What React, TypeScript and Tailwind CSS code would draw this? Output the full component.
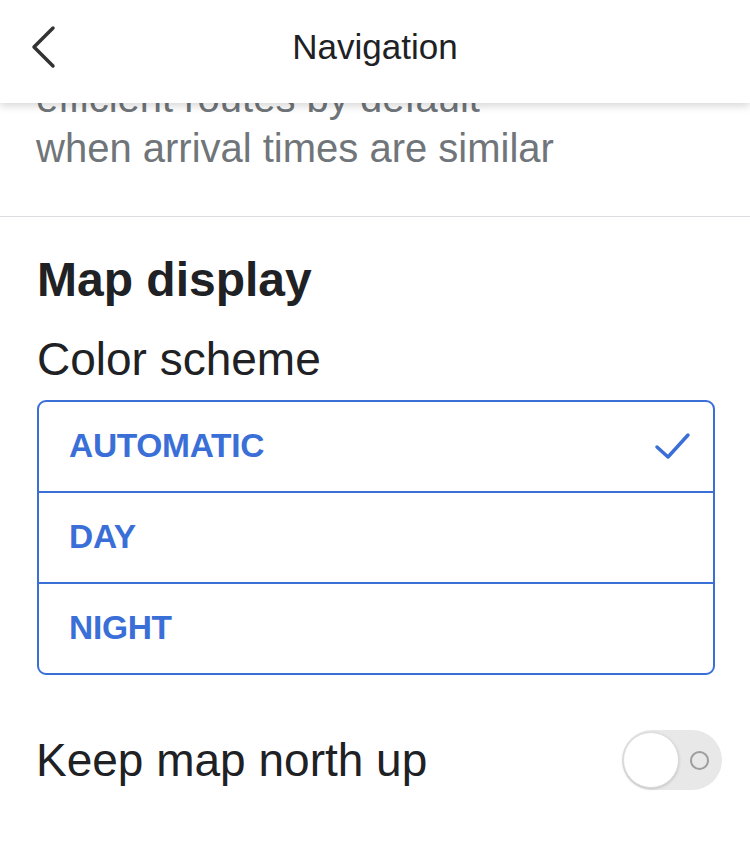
import { useState } from 'react';

const schemes = ['AUTOMATIC', 'DAY', 'NIGHT'];

function BackChevron() {
  return (
    <svg width="30" height="44" viewBox="0 0 30 44" fill="none">
      <path d="M22 3 L3 22 L22 41" stroke="#333333" strokeWidth="3.5" strokeLinecap="round" strokeLinejoin="round" />
    </svg>
  );
}

function Check() {
  return (
    <svg width="40" height="32" viewBox="0 0 40 32" fill="none">
      <path d="M4 16 L15 26 L35 4" stroke="#3a6fd8" strokeWidth="3.5" strokeLinecap="round" strokeLinejoin="round" />
    </svg>
  );
}

function Toggle({ on, onChange }: { on: boolean; onChange: () => void }) {
  return (
    <button
      onClick={onChange}
      aria-pressed={on}
      className="relative w-[100px] h-[60px] rounded-full bg-[#e8e8e8] flex items-center shrink-0"
    >
      <span className="absolute left-[1px] top-[2px] w-[56px] h-[56px] rounded-full bg-white border border-[#dcdcdc] shadow-[0_1px_3px_rgba(0,0,0,0.18)]" />
      <span className="absolute right-[13px] top-[21px] w-[19px] h-[19px] rounded-full border-2 border-[#9e9e9e]" />
    </button>
  );
}

export default function App() {
  const [scheme, setScheme] = useState('AUTOMATIC');
  const [northUp, setNorthUp] = useState(false);

  return (
    <div className="relative w-[750px] h-[864px] bg-white overflow-hidden text-[#202124] font-['Liberation_Sans',Arial,sans-serif]">
      <header className="absolute top-0 left-0 right-0 h-[103px] bg-white z-10 shadow-[0_3px_8px_rgba(0,0,0,0.16)] flex items-center">
        <div className="absolute left-[31px] top-[25px]">
          <BackChevron />
        </div>
        <h1 className="w-full text-center text-[35px] leading-none -mt-[10px]">Navigation</h1>
      </header>

      <main className="pt-[73px]">
        <p className="px-[36px] text-[40px] leading-[50px] text-[#70757a]">
          efficient routes by default
          <br />
          when arrival times are similar
        </p>

        <div className="mt-[43px] h-px bg-[#dadce0]" />

        <section className="px-[37px]">
          <h2 className="mt-[35px] text-[48px] leading-[56px] font-bold">Map display</h2>
          <h3 className="mt-[23px] text-[46px] leading-[56px]">Color scheme</h3>

          <div className="mt-[13px] mr-[-2px] border-2 border-[#3a6fd8] rounded-[9px] overflow-hidden">
            {schemes.map((s, i) => (
              <button
                key={s}
                onClick={() => setScheme(s)}
                className={`w-full flex items-center justify-between pl-[30px] pr-[20px] text-left ${
                  i > 0 ? 'h-[91px] border-t-2 border-[#3a6fd8]' : 'h-[89px]'
                }`}
              >
                <span className="text-[33.5px] font-bold text-[#3a6fd8] tracking-[-0.3px]">{s}</span>
                {scheme === s && <Check />}
              </button>
            ))}
          </div>
        </section>

        <div className="mt-[55px] pl-[36px] pr-[28px] flex items-center justify-between">
          <span className="text-[46px] leading-[56px]">Keep map north up</span>
          <Toggle on={northUp} onChange={() => setNorthUp(!northUp)} />
        </div>
      </main>
    </div>
  );
}
